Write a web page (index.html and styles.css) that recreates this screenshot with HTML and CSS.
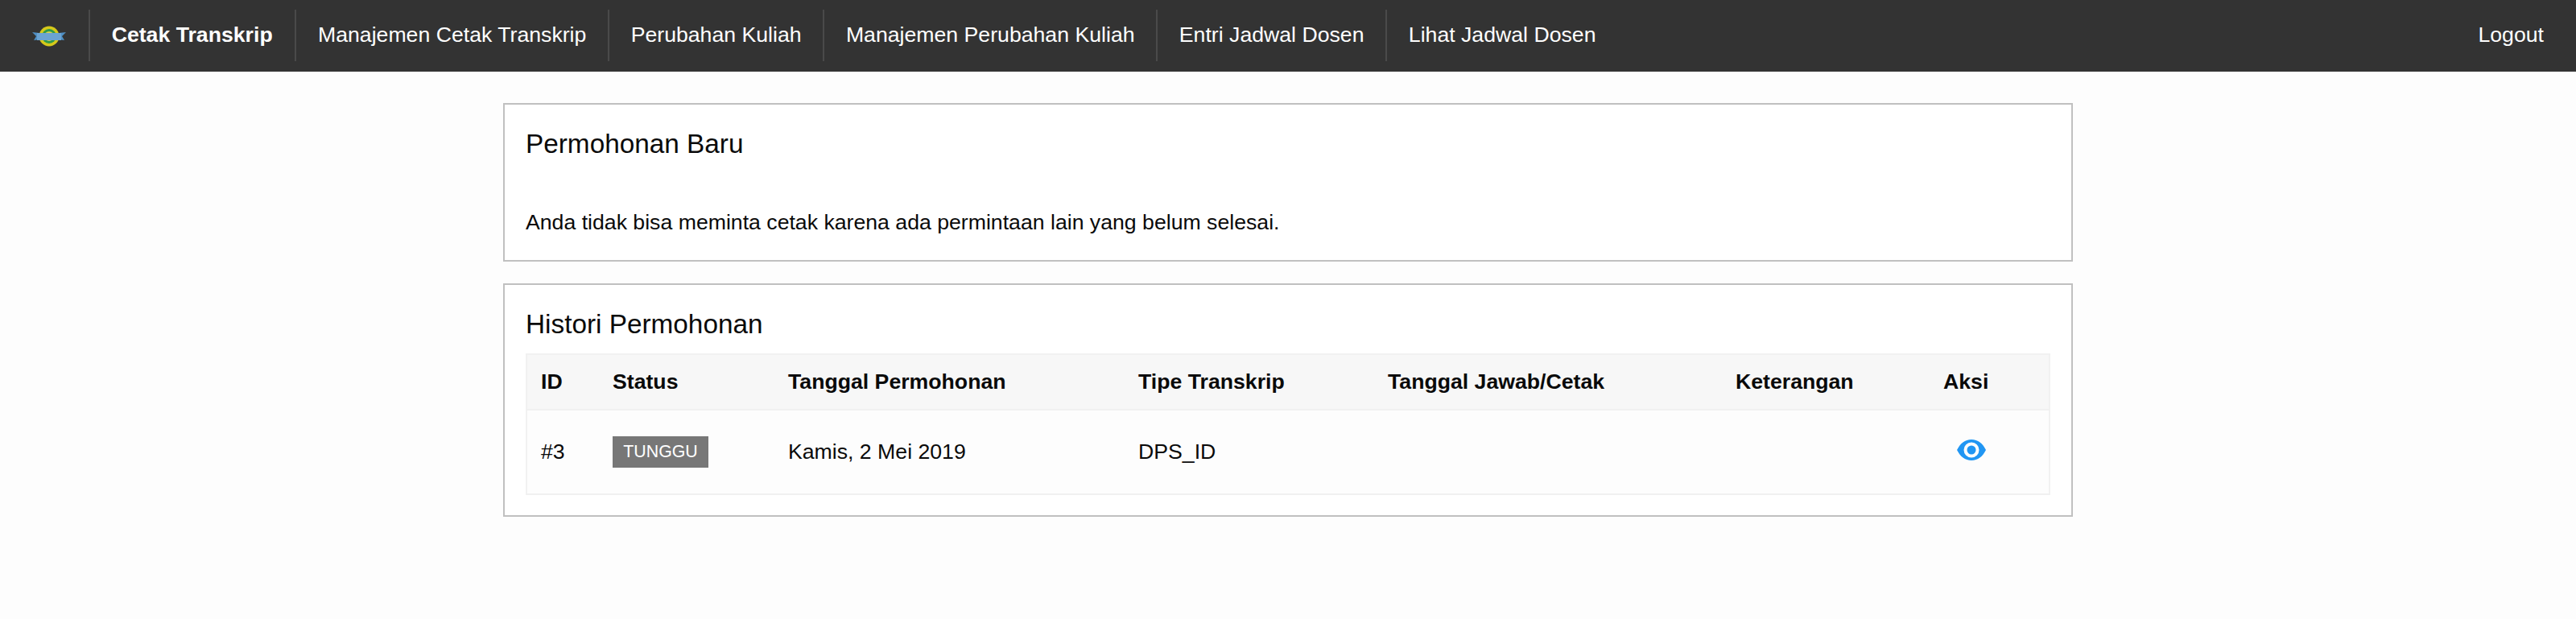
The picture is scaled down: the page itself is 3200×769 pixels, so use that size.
FILE: index.html

```html
<!DOCTYPE html>
<html lang="id">
<head>
  <meta charset="UTF-8">
  <title>Cetak Transkrip</title>
  <link rel="stylesheet" href="styles.css">
</head>
<body>
  <nav class="navbar">
    <a class="nav-logo" href="#">
      <svg width="42" height="26" viewBox="0 0 42 26">
        <polygon points="0,8 9,9 9,17 2,18 5,13" fill="#4f8fc4"/>
        <polygon points="42,8 33,9 33,17 40,18 37,13" fill="#4f8fc4"/>
        <circle cx="21" cy="13" r="12.500" fill="#d6c91a"/>
        <circle cx="21" cy="13" r="9" fill="#2f9a4c"/>
        <circle cx="21" cy="13" r="6" fill="#d6d24a"/>
        <rect x="6" y="9" width="30" height="9" fill="#6ba3d2"/>
      </svg>
    </a>
    <a class="nav-item active" href="#">Cetak Transkrip</a>
    <a class="nav-item" href="#">Manajemen Cetak Transkrip</a>
    <a class="nav-item" href="#">Perubahan Kuliah</a>
    <a class="nav-item" href="#">Manajemen Perubahan Kuliah</a>
    <a class="nav-item" href="#">Entri Jadwal Dosen</a>
    <a class="nav-item nav-item-last" href="#">Lihat Jadwal Dosen</a>
    <a class="nav-logout" href="#">Logout</a>
  </nav>

  <main class="content">
    <section class="panel panel-new">
      <h2 class="panel-title">Permohonan Baru</h2>
      <p class="panel-text">Anda tidak bisa meminta cetak karena ada permintaan lain yang belum selesai.</p>
    </section>

    <section class="panel panel-history">
      <h2 class="panel-title">Histori Permohonan</h2>
      <table class="history-table">
        <colgroup>
          <col class="col-id">
          <col class="col-status">
          <col class="col-date">
          <col class="col-type">
          <col class="col-reply">
          <col class="col-note">
          <col class="col-action">
        </colgroup>
        <thead>
          <tr>
            <th>ID</th>
            <th>Status</th>
            <th>Tanggal Permohonan</th>
            <th>Tipe Transkrip</th>
            <th>Tanggal Jawab/Cetak</th>
            <th>Keterangan</th>
            <th>Aksi</th>
          </tr>
        </thead>
        <tbody>
          <tr>
            <td>#3</td>
            <td><span class="badge">TUNGGU</span></td>
            <td>Kamis, 2 Mei 2019</td>
            <td>DPS_ID</td>
            <td></td>
            <td></td>
            <td>
              <a class="eye-link" href="#">
                <svg width="36" height="26" viewBox="0 0 36 26">
                  <path fill="#2196f3" fill-rule="evenodd" d="M0 13C4 5 10 0 18 0s14 5 18 13c-4 8-10 13-18 13S4 21 0 13zM18 3.500a9.500 9.500 0 1 0 0 19 9.500 9.500 0 0 0 0-19zM18 7.500a5.500 5.500 0 1 1 0 11 5.500 5.500 0 0 1 0-11z"/>
                </svg>
              </a>
            </td>
          </tr>
        </tbody>
      </table>
    </section>
  </main>
</body>
</html>
```

FILE: styles.css

```css
* { box-sizing: border-box; }
body {
  margin: 0;
  background: #fdfdfd;
  color: #0a0a0a;
  font-family: "Liberation Sans", Arial, sans-serif;
  font-size: 26.67px;
}
a { color: inherit; text-decoration: none; }

.navbar {
  display: flex;
  align-items: center;
  height: 89px;
  padding-bottom: 2px;
  background: #333333;
  color: #ffffff;
}
.nav-logo {
  display: flex;
  justify-content: center;
  width: 112px;
  height: 64px;
  padding: 20px 0 0 12px;
  border-right: 2px solid #4a4a4a;
}
.nav-item {
  display: flex;
  align-items: center;
  height: 64px;
  padding: 0 26.67px;
  border-right: 2px solid #4a4a4a;
}
.nav-item-last { border-right: none; }
.active { font-weight: bold; padding-right: 27.67px; }
.nav-logout { margin-left: auto; padding-right: 40px; }

.content {
  display: flex;
  flex-direction: column;
  gap: 27px;
  width: 1950px;
  margin: 39px auto 0;
}
.panel {
  background: #ffffff;
  border: 2px solid #c0c0c0;
  padding: 27px 26px 26px;
}
.panel-new { height: 197px; }
.panel-history { height: 290px; }
.panel-title {
  margin: 0;
  font-size: 33.33px;
  font-weight: normal;
  line-height: 44px;
}
.panel-text { margin: 55px 0 0; line-height: 40px; }
.panel-history .panel-title { margin-bottom: 14px; }

.history-table {
  width: 100%;
  table-layout: fixed;
  border-collapse: collapse;
  border: 2px solid #f1f1f1;
}
.col-id { width: 90px; }
.col-status { width: 218px; }
.col-date { width: 435px; }
.col-type { width: 310px; }
.col-reply { width: 432px; }
.col-note { width: 258px; }
.history-table th {
  height: 69px;
  padding: 0 17px;
  text-align: left;
  background: #f7f7f7;
  border-bottom: 2px solid #f1f1f1;
}
.history-table td {
  height: 105px;
  padding: 0 17px;
  background: #fdfdfd;
}
.badge {
  display: inline-block;
  padding: 0 13.33px;
  background: #777777;
  color: #ffffff;
  font-size: 21.33px;
  line-height: 39px;
}
.eye-link { display: block; padding: 0 0 6px 17px; line-height: 0; }
```
